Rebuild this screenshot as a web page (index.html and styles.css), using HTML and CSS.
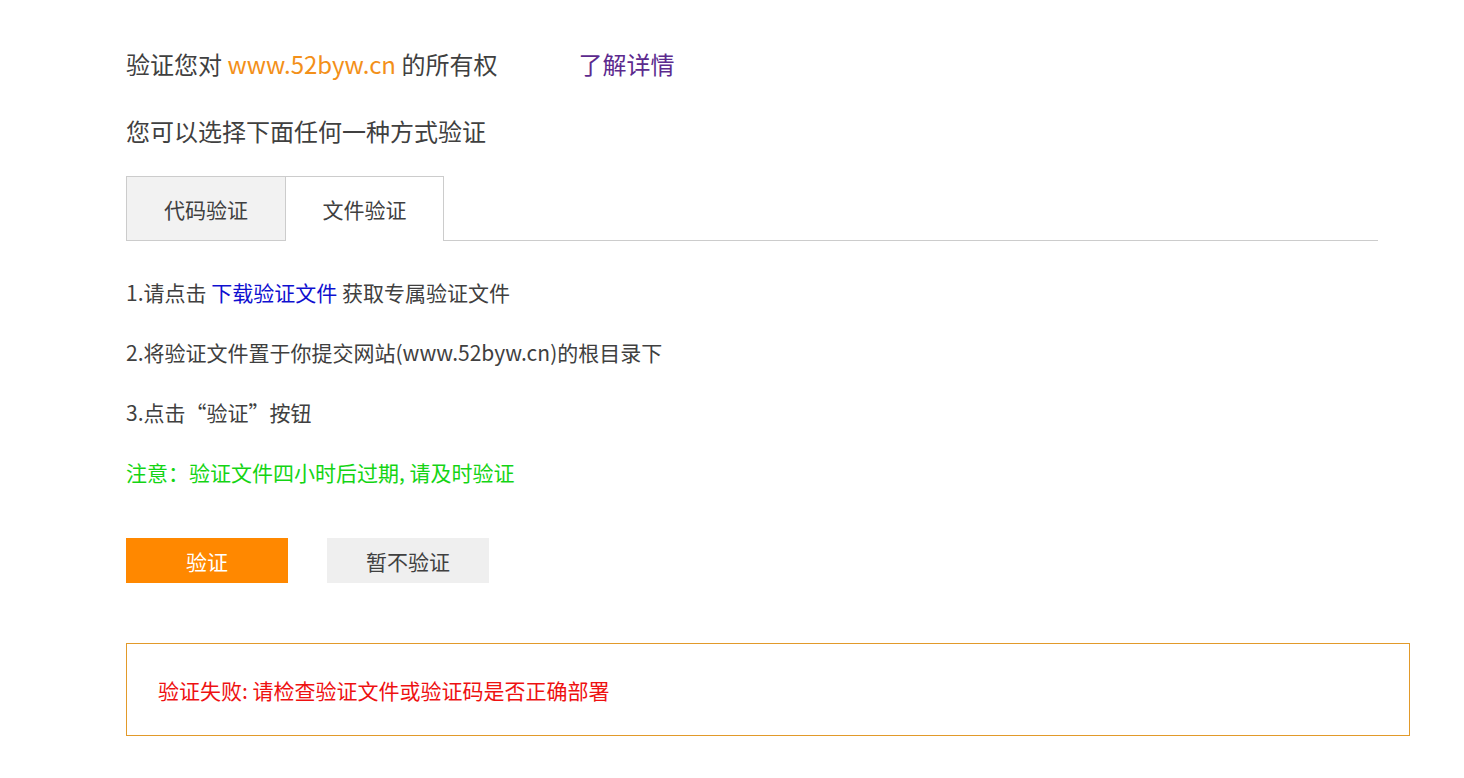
FILE: index.html
```html
<!DOCTYPE html>
<html lang="zh-CN">
<head>
<meta charset="utf-8">
<title>验证网站所有权</title>
<link rel="stylesheet" href="styles.css">
</head>
<body>
<div class="page">
  <div class="head-row">
    <h1 class="title">验证您对 <span class="domain">www.52byw.cn</span> 的所有权</h1>
    <a class="more" href="#">了解详情</a>
  </div>
  <p class="subtitle">您可以选择下面任何一种方式验证</p>

  <div class="tabs">
    <div class="tab">代码验证</div>
    <div class="tab active">文件验证</div>
    <div class="tab-rest"></div>
  </div>

  <ol class="steps">
    <li>1.请点击 <a class="dl" href="#">下载验证文件</a> 获取专属验证文件</li>
    <li>2.将验证文件置于你提交网站(www.52byw.cn)的根目录下</li>
    <li>3.点击“验证”按钮</li>
    <li class="note">注意：验证文件四小时后过期, 请及时验证</li>
  </ol>

  <div class="actions">
    <button class="btn primary">验证</button>
    <button class="btn secondary">暂不验证</button>
  </div>

  <div class="result">验证失败: 请检查验证文件或验证码是否正确部署</div>
</div>
</body>
</html>
```

FILE: styles.css
```css
* { box-sizing: border-box; }
html, body { margin: 0; padding: 0; background: #fff; }
body {
  font-family: "Microsoft YaHei", "Noto Sans CJK SC", "Noto Sans", sans-serif;
  color: #404040;
}
.page {
  padding: 40px 54px 0 126px;
}
.head-row {
  display: flex;
  align-items: center;
  height: 48px;
}
.title {
  margin: 0;
  font-size: 24px;
  font-weight: normal;
  color: #404040;
  line-height: 48px;
}
.domain { color: #f39019; }
.more {
  margin-left: 81px;
  font-size: 24px;
  color: #5c2a8e;
  text-decoration: none;
  line-height: 48px;
}
.subtitle {
  margin: 27px 0 0 0;
  font-size: 24px;
  line-height: 32px;
}
.tabs {
  display: flex;
  margin-top: 29px;
  margin-right: 32px;
  height: 65px;
}
.tab {
  width: 160px;
  height: 65px;
  display: flex;
  align-items: center;
  justify-content: center;
  font-size: 21px;
  color: #404040;
  background: #f2f2f2;
  border: 1px solid #cccccc;
}
.tab.active {
  width: 158px;
  background: #fff;
  border-left: none;
  border-bottom: none;
}
.tab-rest {
  flex: 1;
  border-bottom: 1px solid #cccccc;
}
.steps {
  list-style: none;
  margin: 0;
  padding: 21px 0 0 0;
}
.steps li {
  font-size: 21px;
  line-height: 60px;
  color: #404040;
}
.dl { color: #1010d0; text-decoration: none; }
.note { color: #14d414 !important; }
.actions {
  display: flex;
  gap: 39px;
  margin-top: 36px;
}
.btn {
  width: 162px;
  height: 45px;
  border: none;
  font-family: inherit;
  font-size: 21px;
  padding: 0;
}
.primary { background: #ff8800; color: #fff; }
.secondary { background: #efefef; color: #404040; }
.result {
  margin-top: 60px;
  height: 93px;
  border: 1px solid #e29a2a;
  padding-left: 31px;
  display: flex;
  align-items: center;
  font-size: 21px;
  color: #ee1111;
}
```
